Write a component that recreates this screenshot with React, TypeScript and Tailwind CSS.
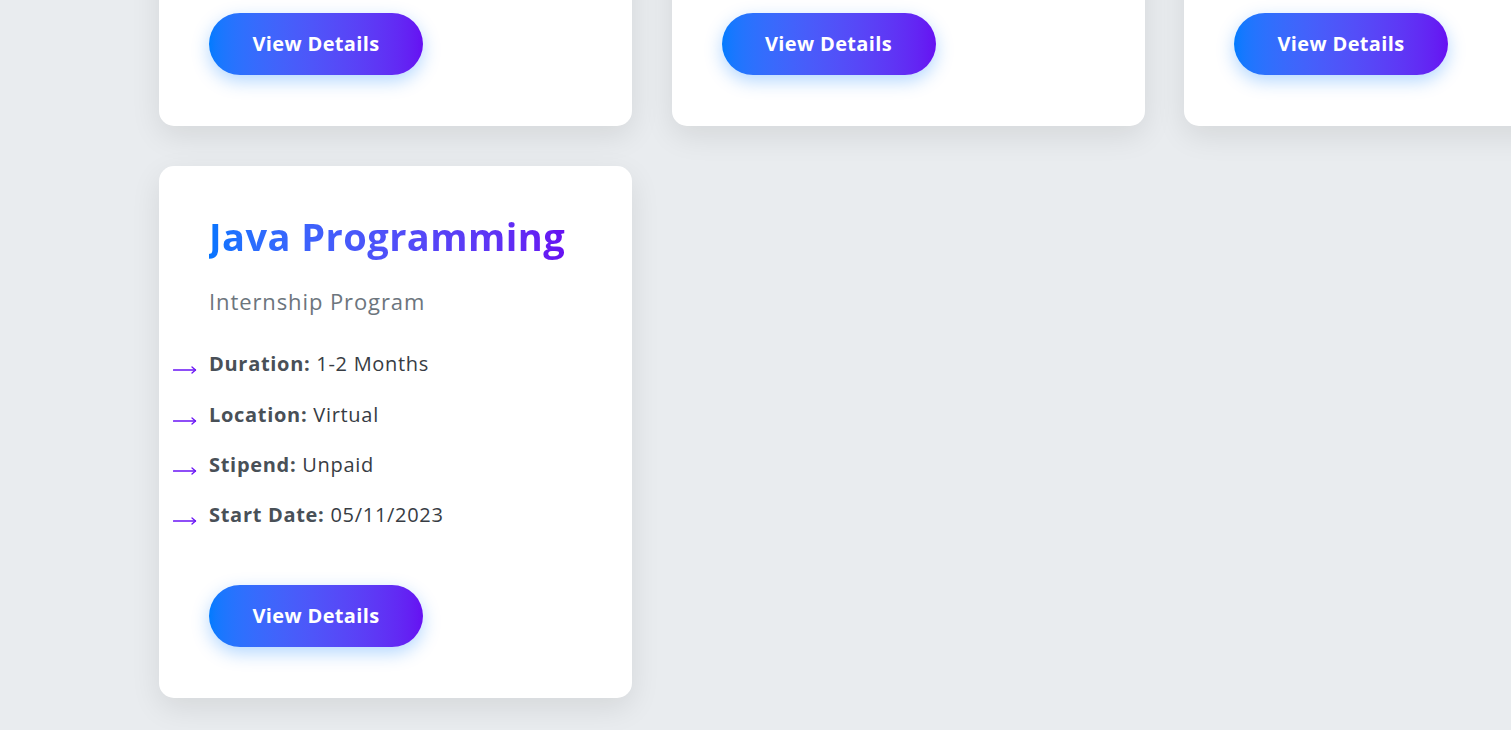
import React from "react";

type Card = {
  title: string;
  subtitle: string;
  duration: string;
  location: string;
  stipend: string;
  start: string;
};

const cards: Card[] = [
  { title: "Web Development", subtitle: "Internship Program", duration: "1-2 Months", location: "Virtual", stipend: "Unpaid", start: "05/11/2023" },
  { title: "Python Programming", subtitle: "Internship Program", duration: "1-2 Months", location: "Virtual", stipend: "Unpaid", start: "05/11/2023" },
  { title: "C++ Programming", subtitle: "Internship Program", duration: "1-2 Months", location: "Virtual", stipend: "Unpaid", start: "05/11/2023" },
  { title: "Java Programming", subtitle: "Internship Program", duration: "1-2 Months", location: "Virtual", stipend: "Unpaid", start: "05/11/2023" },
];

function Arrow() {
  return (
    <svg
      className="absolute left-[-36px] top-[17px]"
      width="24"
      height="8"
      viewBox="0 0 24 8"
      fill="none"
      stroke="#6a14f5"
      strokeWidth="1.3"
      strokeLinecap="round"
      strokeLinejoin="round"
    >
      <path d="M0.5 4H22.5" />
      <path d="M19 1L22.5 4L19 7" />
    </svg>
  );
}

function Item({ label, value }: { label: string; value: string }) {
  return (
    <li className="relative leading-[30px] text-[20px] text-[#373c43] tracking-[0.7px]">
      <Arrow />
      <span className="font-bold text-[#495057]">{label}</span> {value}
    </li>
  );
}

function InternCard({ c }: { c: Card }) {
  return (
    <div className="bg-white rounded-[15px] shadow-[0_10px_30px_rgba(0,0,0,0.09)] px-[50px] pt-[50px] pb-[51px] flex flex-col items-start">
      <h3 className="inline-block text-[38px] leading-[40px] pb-[8px] mb-[-8px] font-bold tracking-[0.45px] bg-gradient-to-r from-[#0575ff] to-[#6610f2] bg-clip-text text-transparent whitespace-nowrap">
        {c.title}
      </h3>
      <p className="mt-[30px] text-[22px] leading-[30px] text-[#6c757d] tracking-[0.9px]">{c.subtitle}</p>
      <ul className="mt-[33px] flex flex-col gap-[20.4px]">
        <Item label="Duration:" value={c.duration} />
        <Item label="Location:" value={c.location} />
        <Item label="Stipend:" value={c.stipend} />
        <Item label="Start Date:" value={c.start} />
      </ul>
      <button className="mt-[55px] h-[62px] w-[214px] rounded-full bg-gradient-to-r from-[#007bff] to-[#6610f2] text-white text-[20px] font-bold tracking-[0.35px] shadow-[0_6px_18px_rgba(0,123,255,0.3)]">
        View Details
      </button>
    </div>
  );
}

export default function App() {
  return (
    <div
      className="h-[730px] w-full overflow-hidden bg-[#e9ecef]"
      style={{ fontFamily: '"Open Sans", "Noto Sans", sans-serif' }}
    >
      <div className="mt-[-406px] pl-[159px] grid grid-cols-[473px_473px_473px] gap-x-[39.5px] gap-y-[40px]">
        {cards.map((c, i) => (
          <InternCard key={i} c={c} />
        ))}
      </div>
    </div>
  );
}
